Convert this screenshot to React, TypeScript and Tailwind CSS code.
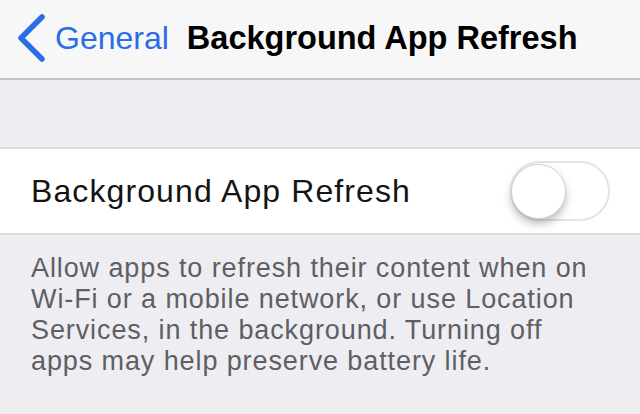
// Settings screen: "Background App Refresh" with a single switch row and footer note.

function BackChevron() {
  return (
    <svg width="30" height="48" viewBox="0 0 30 48" className="shrink-0">
      <path
        d="M26 3 L5 24 L26 45"
        fill="none"
        stroke="#2b6de6"
        strokeWidth="5.5"
        strokeLinecap="round"
        strokeLinejoin="round"
      />
    </svg>
  );
}

function Toggle({ on = false }: { on?: boolean }) {
  return (
    <div
      className={
        "relative h-[60px] w-[100px] rounded-full border-2 " +
        (on ? "border-[#4cd964] bg-[#4cd964]" : "border-[#e4e4e4] bg-white")
      }
    >
      <div
        className={
          "absolute top-[1px] h-[55px] w-[55px] rounded-full border border-[#d2d2d2] bg-white shadow-[0_5px_8px_rgba(0,0,0,0.25)] " +
          (on ? "right-[1px]" : "left-[-1px]")
        }
      />
    </div>
  );
}

export default function App() {
  return (
    <div
      className="h-[414px] w-[640px] overflow-hidden bg-[#ededf2]"
      style={{ fontFamily: '"Liberation Sans", Arial, sans-serif' }}
    >
      <header className="flex h-[80px] items-center border-b-2 border-[#c4c4c8] bg-[#f7f7f8] pb-[2px] pl-[16px]">
        <BackChevron />
        <span className="ml-[9px] text-[32px] text-[#2b6de6]">General</span>
        <span className="ml-[18px] text-[32.5px] font-bold text-black">
          Background App Refresh
        </span>
      </header>

      <div className="mt-[67px] flex h-[88px] items-center justify-between border-y-2 border-[#dcdce0] bg-white pl-[31px] pr-[30px]">
        <span className="text-[32px] tracking-[1.1px] text-[#141414]">
          Background App Refresh
        </span>
        <Toggle />
      </div>

      <p className="pl-[31px] pr-[36px] pt-[18px] text-[27px] leading-[31px] tracking-[0.9px] text-[#5f5f63]">
        Allow apps to refresh their content when on Wi-Fi or a mobile network,
        or use Location Services, in the background. Turning off apps may help
        preserve battery life.
      </p>
    </div>
  );
}
